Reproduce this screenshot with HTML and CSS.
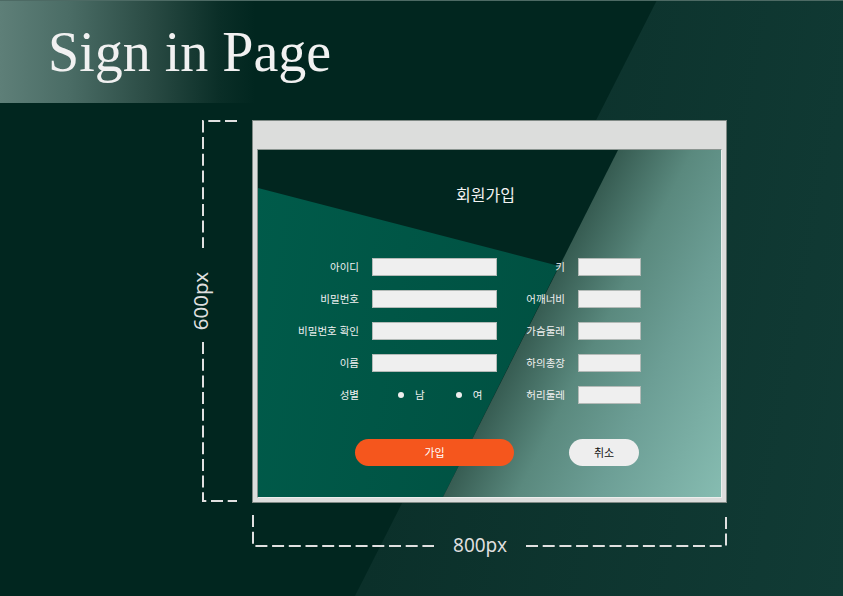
FILE: index.html
```html
<!DOCTYPE html>
<html lang="ko">
<head>
<meta charset="utf-8">
<title>Sign in Page</title>
<link rel="stylesheet" href="styles.css">
</head>
<body>
<div class="page">
  <header class="hero">
    <h1 class="hero-title">Sign in Page</h1>
  </header>
  <section class="stage">
    <div class="vmeasure">
      <svg class="vm-top" width="67" height="128" viewBox="0 0 67 128">
        <path class="dash" d="M52 1 H18 V128"/>
      </svg>
      <div class="vm-label"><span class="vm-text">600px</span></div>
      <svg class="vm-bottom" width="67" height="161" viewBox="0 0 67 161">
        <path class="dash" d="M18 0 V159 H52"/>
      </svg>
    </div>

    <div class="window">
      <div class="panel">
        <div class="panel-body">
          <h2 class="signup-title">회원가입</h2>
          <div class="form-grid">
            <label class="label">아이디</label>
            <input class="field" type="text">
            <label class="label">키</label>
            <input class="field" type="text">

            <label class="label">비밀번호</label>
            <input class="field" type="password">
            <label class="label">어깨너비</label>
            <input class="field" type="text">

            <label class="label">비밀번호 확인</label>
            <input class="field" type="password">
            <label class="label">가슴둘레</label>
            <input class="field" type="text">

            <label class="label">이름</label>
            <input class="field" type="text">
            <label class="label">하의총장</label>
            <input class="field" type="text">

            <span class="label">성별</span>
            <div class="radio-group">
              <span class="radio"><span class="dot"></span>남</span>
              <span class="radio"><span class="dot"></span>여</span>
            </div>
            <label class="label">허리둘레</label>
            <input class="field" type="text">
          </div>
          <div class="actions">
            <button class="btn btn-primary" type="button">가입</button>
            <button class="btn btn-secondary" type="button">취소</button>
          </div>
        </div>
      </div>
    </div>

    <div class="hmeasure">
      <svg class="hm-left" width="182" height="32" viewBox="0 0 182 32">
        <path class="dash" d="M1 0 V31 H182"/>
      </svg>
      <span class="hm-text">800px</span>
      <svg class="hm-right" width="202" height="32" viewBox="0 0 202 32">
        <path class="dash" d="M0 31 H200 V0"/>
      </svg>
    </div>
  </section>
</div>
</body>
</html>
```

FILE: styles.css
```css
* { box-sizing: border-box; }

html, body {
  margin: 0;
  padding: 0;
}

body {
  width: 843px;
  height: 596px;
  overflow: hidden;
  background: #01261f;
  font-family: "Noto Sans", "Noto Sans CJK KR", sans-serif;
}

.page {
  position: relative;
  width: 843px;
  height: 596px;
  overflow: hidden;
  background: #01261f;
}

.page::before {
  content: "";
  position: absolute;
  inset: 0;
  clip-path: polygon(657px 0, 100% 0, 100% 100%, 355px 100%);
  background: linear-gradient(100deg, #0a2e28 40%, #113b35 100%);
}

.hero,
.stage {
  position: relative;
  z-index: 1;
}

.hero {
  height: 103px;
  padding: 23px 0 0 48px;
  border-top: 1px solid #4d6a64;
  background: linear-gradient(90deg, #5e7f78 0px, #4a6c65 70px, #2a4b44 150px, #0a2e27 220px, rgba(1, 38, 31, 0) 255px) no-repeat;
}

.hero-title {
  margin: 0;
  font: 400 56px/56px "Liberation Serif", serif;
  color: #f1f1f1;
}

.stage {
  display: grid;
  grid-template-columns: 67px 475px;
  grid-template-rows: 383px 50px;
  margin-top: 17px;
  padding-left: 185px;
}

.dash {
  fill: none;
  stroke: #e0e0e0;
  stroke-width: 2;
  stroke-dasharray: 12 4.7;
}

.vmeasure {
  grid-column: 1;
  grid-row: 1;
  display: flex;
  flex-direction: column;
}

.vmeasure svg,
.hmeasure svg {
  display: block;
  flex: none;
}

.vm-label {
  height: 94px;
  padding-top: 12px;
  display: flex;
  align-items: center;
}

.vm-text {
  writing-mode: vertical-rl;
  transform: rotate(180deg);
  margin-left: 5px;
  font: 400 20.5px/20px "Noto Sans", sans-serif;
  color: #dedede;
}

.hmeasure {
  grid-column: 2;
  grid-row: 2;
  display: flex;
  align-items: flex-start;
  margin-top: 12px;
}

.hm-text {
  flex: none;
  width: 92px;
  margin-top: 21px;
  text-align: center;
  font: 400 19px/19px "Noto Sans", sans-serif;
  color: #dedede;
}

.window {
  grid-column: 2;
  grid-row: 1;
  width: 475px;
  height: 383px;
  padding: 28px 4px 4px;
  background: #dcdddc;
  border: 1px solid #7f8985;
}

.panel {
  position: relative;
  height: 100%;
  overflow: hidden;
  background: #01261f;
  border: 1px solid;
  border-color: #8b9591 #eceeed #eceeed #8b9591;
}

.panel::before {
  content: "";
  position: absolute;
  inset: 0;
  clip-path: polygon(0 38px, 301px 116px, 185px 100%, 0 100%);
  background: linear-gradient(100deg, #005b4a, #004b3d);
}

.panel::after {
  content: "";
  position: absolute;
  inset: 0;
  clip-path: polygon(360px 0, 100% 0, 100% 100%, 185px 100%);
  background: linear-gradient(117deg, #355a50 56%, #5a897e 68%, #6c9e95 80%, #86bcb1 100%);
}

.panel-body {
  position: relative;
  z-index: 1;
}

.signup-title {
  margin: 34px 0 0;
  padding-right: 8px;
  text-align: center;
  font: 400 16px/20px "Noto Sans CJK KR", sans-serif;
  color: #f3f3f3;
}

.form-grid {
  margin-top: 54px;
  display: grid;
  grid-template-columns: 101px 125px 55px 63px;
  grid-auto-rows: 18px;
  column-gap: 13px;
  row-gap: 14px;
}

.label {
  display: block;
  text-align: right;
  white-space: nowrap;
  font: 400 10.5px/18px "Noto Sans CJK KR", sans-serif;
  color: #f1f1f1;
}

.field {
  display: block;
  width: 100%;
  height: 18px;
  margin: 0;
  padding: 0 4px;
  background: #efefef;
  border: 1px solid #b3bab7;
  border-radius: 0;
  outline: none;
}

.radio-group {
  display: flex;
  align-items: center;
  gap: 31px;
  padding-left: 26px;
}

.radio {
  display: flex;
  align-items: center;
  gap: 11px;
  font: 400 10.5px/18px "Noto Sans CJK KR", sans-serif;
  color: #f1f1f1;
}

.dot {
  width: 6px;
  height: 6px;
  border-radius: 50%;
  background: #eeeeee;
}

.actions {
  display: flex;
  gap: 55px;
  margin-top: 35px;
  padding-left: 97px;
}

.btn {
  height: 27px;
  padding: 0;
  border: 0;
  border-radius: 14px;
  font: 400 11px/27px "Noto Sans CJK KR", sans-serif;
  cursor: pointer;
}

.btn-primary {
  width: 159px;
  background: #f5561d;
  color: #ffffff;
}

.btn-secondary {
  width: 70px;
  background: #eeeeee;
  color: #111111;
}
```
